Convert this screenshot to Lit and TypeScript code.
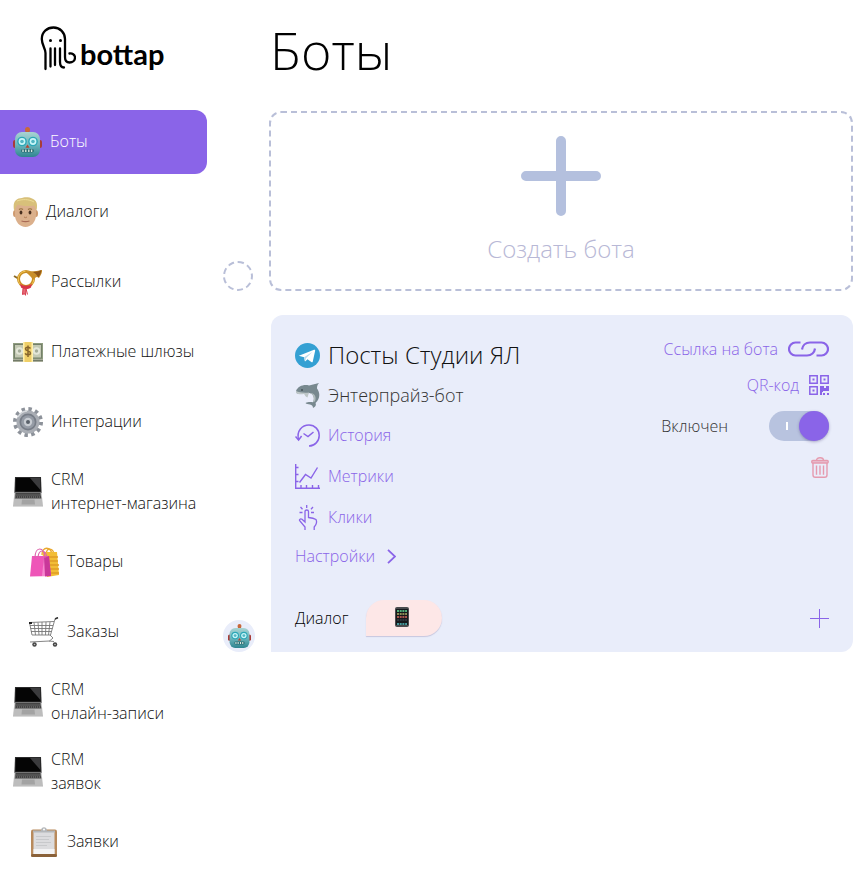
import { LitElement, html, css, svg, type TemplateResult } from "lit";
import { customElement, property, state } from "lit/decorators.js";
import { classMap } from "lit/directives/class-map.js";

interface Icon {
  w: number;
  h: number;
  art: TemplateResult;
}

const icons: Record<string, Icon> = {
  robot: {
    w: 29,
    h: 30,
    art: svg`
      <defs><linearGradient id="rb" x1="0" y1="0" x2="0" y2="1"><stop offset="0" stop-color="#a9d3d2"/><stop offset=".5" stop-color="#6eb6bd"/><stop offset="1" stop-color="#2f8590"/></linearGradient></defs>
      <rect x="12.500" y="3" width="4" height="4" fill="#b5603a"/><circle cx="14.500" cy="2.500" r="2.500" fill="#c8683a"/>
      <rect x="0" y="13" width="4" height="8" rx="2" fill="#a83c38"/><rect x="25" y="13" width="4" height="8" rx="2" fill="#a83c38"/>
      <rect x="2" y="5" width="25" height="25" rx="7" fill="url(#rb)"/>
      <circle cx="9" cy="14.500" r="4.800" fill="#2ba7b7"/><circle cx="20" cy="14.500" r="4.800" fill="#2ba7b7"/>
      <circle cx="9" cy="14.500" r="3.400" fill="#c9f6f8"/><circle cx="20" cy="14.500" r="3.400" fill="#c9f6f8"/>
      <circle cx="9" cy="14.500" r="1.800" fill="#52b6c3"/><circle cx="20" cy="14.500" r="1.800" fill="#52b6c3"/>
      <path d="M14.500 17.500l2 3.200h-4z" fill="#b8452f"/>
      <rect x="8" y="22" width="13" height="3.600" rx="1.800" fill="#2b6d72"/><path d="M10 22.500v2.600M12.800 22.500v2.600M15.800 22.500v2.600M18.600 22.500v2.600" stroke="#dcebe5" stroke-width="1.300"/>`,
  },
  face: {
    w: 25,
    h: 30,
    art: svg`
      <ellipse cx="2" cy="16.500" rx="2" ry="3.500" fill="#cf9a70"/><ellipse cx="23" cy="16.500" rx="2" ry="3.500" fill="#cf9a70"/>
      <path d="M2 10C2 4 6 2 12.500 2S23 4 23 10v8c0 7-5 12-10.500 12S2 25 2 18z" fill="#dbb08c"/>
      <path d="M1 13C-.5 5 3 1 9 1c2-1.500 15-1.500 15 7 0 2 0 4-.6 5.500C22.500 11 22 9.500 21 8.500 15 9.500 8 9 5 7.500 3.500 9 2 11 1.600 14z" fill="#d8c07a"/>
      <path d="M4 4c5-2 12-2 17 1" stroke="#eddc96" fill="none"/>
      <path d="M6 12.500q2-1.500 4 0M15 12.500q2-1.500 4 0" stroke="#97703c" stroke-width="1.200" fill="none"/>
      <ellipse cx="8" cy="15.500" rx="1.400" ry="1.900" fill="#4a3020"/><ellipse cx="17" cy="15.500" rx="1.400" ry="1.900" fill="#4a3020"/>
      <path d="M11 20q1.500 1.300 3 0" stroke="#b07b55" fill="none"/><path d="M8.500 24q4 1.200 8 0" stroke="#a86a55" stroke-width="1.200" fill="none"/>`,
  },
  horn: {
    w: 30,
    h: 30,
    art: svg`
      <g transform="translate(0 3)"><path d="M1 6l5 3" stroke="#8d6a26" stroke-width="2"/>
      <circle cx="13" cy="9" r="7.500" fill="none" stroke="#c98d1f" stroke-width="3"/><circle cx="13" cy="9" r="7.800" fill="none" stroke="#f2c95a" stroke-width="1"/>
      <path d="M12 1C18 1.500 23 1.500 29 0c.5 2-1 5-3 8-2-1.500-3.500-1.500-5 2z" fill="#c98f2a"/><path d="M20 2q5 0 8.500-2-.5 4-3 7.500-1.500-3.500-5.500-5.500z" fill="#8f5619"/>
      <path d="M7 13.500c3 3 9 3 12 0l-1 4c-3 2-7 2-10 0z" fill="#d83448"/><path d="M10 18.500l-.5 6 2-.8 1 1.600.5-7zM13 18.500l1.500 6" stroke="#d83b4c" fill="#e66a78"/></g>`,
  },
  money: {
    w: 30,
    h: 30,
    art: svg`
      <rect x="0" y="6" width="30" height="17" fill="#8f9c80"/><path d="M0 22h30v3H0z" fill="#a9ad9b"/><path d="M0 23.500h30" stroke="#727b68"/>
      <rect x="1.500" y="7.500" width="27" height="13.500" fill="#c3c9b3" stroke="#74806a"/>
      <circle cx="6.500" cy="14" r="3.700" fill="#e3e6d8"/><circle cx="23.500" cy="14" r="3.700" fill="#e3e6d8"/><circle cx="6.500" cy="14" r="1.700" fill="#a4ac98"/><circle cx="23.500" cy="14" r="1.700" fill="#a4ac98"/>
      <rect x="10" y="5" width="10" height="20" fill="#efcf68"/><path d="M10 5h1.500v20H10zM18.500 5H20v20h-1.500z" fill="#fff0ad"/>
      <path d="M17.500 11.500c-1-1.700-5-1.700-5 .5s5 1.600 5 4-4.200 2.300-5.400.3M15 8.500v11.500" fill="none" stroke="#86652b" stroke-width="1.500"/>`,
  },
  gear: {
    w: 30,
    h: 30,
    art: svg`
      <circle cx="15" cy="15" r="13" fill="none" stroke="#8d929a" stroke-width="4" stroke-dasharray="3.400 3.407"/>
      <circle cx="15" cy="15" r="11.500" fill="#a9adb4"/><circle cx="15" cy="15" r="8.500" fill="#777d87"/><circle cx="15" cy="15" r="6.800" fill="#969ca6"/>
      <circle cx="15" cy="15" r="4.200" fill="#c9cdd3"/><circle cx="15" cy="15" r="2" fill="#59606a"/><path d="M5 10a11 11 0 0 1 9-6" stroke="#d6d9dd" stroke-width="1.500" fill="none"/>`,
  },
  laptop: {
    w: 30,
    h: 30,
    art: svg`
      <path d="M2 0h26l.6 16H1.400z" fill="#2a2a2b"/><path d="M3 1h24l.4 13.500H2.600z" fill="#050505"/><path d="M17 1h10l.4 12z" fill="#3b3b3d"/>
      <path d="M1.500 15.500h27L30 29H0z" fill="#bdbdbd"/><path d="M2.500 16h25l.8 5.500H1.800z" fill="#444"/><path d="M2.500 18h25M2 20h26" stroke="#999" stroke-width=".7" stroke-dasharray="1 1"/>
      <path d="M9 22.500h12.500l.5 5H8.500z" fill="#a3a3a3"/><path d="M0 29h30v1H0z" fill="#d9d9d9"/>`,
  },
  bags: {
    w: 30,
    h: 30,
    art: svg`
      <path d="M13 8c0-9 9-9 10 0M17 7c1-7 7-6 8 0" fill="none" stroke="#e9a92f" stroke-width="1.300"/>
      <path d="M13 5h15l2 23-12 2z" fill="#f2bd35"/><path d="M16 10h13M16 14h13M16 18h14M16 22h14M16 26h14" stroke="#df9c25" stroke-width="1.300"/>
      <path d="M3 9h17l2 20-21 .6z" fill="#ee55b8"/><path d="M15 10l5-1 2 20-6 .4-2-8z" fill="#c9379a"/><path d="M15 10l-2 19h3z" fill="#f787cf"/>
      <path d="M6 11c0-12 9-12 10 0M9 10c1-8 7-8 9 0" fill="none" stroke="#dd63ab" stroke-width="1.200"/>`,
  },
  cart: {
    w: 30,
    h: 30,
    art: svg`
      <g fill="none" stroke="#777" stroke-width=".9"><path d="M29 1l-3 1-4.500 16H3L.5 5.500 25 4.500M1 8.500h23M1.500 11.500h22M2 14.500h20.500M5 5.500l1.500 12.500M9 5.500l1 12.500M13 5v13M17 5l-.5 13M21 5l-1.500 13"/><path d="M21 18l3 3-3.500 3L1 25M25 24.500l-5-.5"/></g>
      <rect x="0" y="5" width="3" height="2" fill="#222"/><path d="M26 2l3-1.500" stroke="#333" stroke-width="1.500"/>
      <circle cx="5.500" cy="27.500" r="2.200" fill="#444"/><circle cx="26" cy="27.500" r="2.200" fill="#444"/><circle cx="5.500" cy="27.500" r=".8" fill="#bbb"/><circle cx="26" cy="27.500" r=".8" fill="#bbb"/>`,
  },
  clipboard: {
    w: 30,
    h: 30,
    art: svg`
      <rect x="2" y="2.500" width="26" height="27.500" rx="2" fill="#b88a5c"/><rect x="2" y="27" width="26" height="3" rx="1.500" fill="#8a6139"/>
      <path d="M4.500 5h21v22h-21z" fill="#dcdcde"/><path d="M4.500 22h21v5h-21z" fill="#f4f4f5"/><path d="M7 9.500h15M7 12.500h13M7 15.500h15M7 18.500h11" stroke="#c3c4c7" stroke-width=".8"/>
      <path d="M4 5.500V3.500h8c0-4.500 6-4.500 6 0h8v2z" fill="#b4b7ba"/><circle cx="15" cy="2.600" r="1" fill="#fff"/>`,
  },
  telegram: {
    w: 25,
    h: 25,
    art: svg`<circle cx="12.500" cy="12.500" r="12.500" fill="#34a0d3"/><path d="M4.500 12.500L19 6.800c1-.3 1.300.2 1.100 1.200l-2.300 10.400c-.2.900-.8 1-1.500.6l-3.800-2.800-1.800 1.800c-.5.500-.9.300-1-.3l-.6-3.400-4.500-1.200c-.7-.2-.7-.5-.1-.6z" fill="#fff"/><path d="M9.100 14.300l8.500-5.600-6.700 6.500-.5 2.800z" fill="#b9d9eb"/>`,
  },
  dolphin: {
    w: 25,
    h: 25,
    art: svg`
      <path d="M1 8C3 3 9 1 14 2.500L24 0c-2 2-2 4-2 5.500C25.500 10 25 16 20.500 20c1 2 0 4-2.500 5 0-2-1-3-3-3.500-2-.3-3.500-.2-4.500-1.500 3-1.500 5.500-1 7.500-.7C20 15 18.500 11 14.500 10L10 11 7 10 2 10.500z" fill="#78898f"/>
      <path d="M1 8c3 1.500 8 2 13 1.500l-1.500 5C10 13.500 10 12 9 11 6 11.500 3 11.500 1 10z" fill="#bdc6c7"/><path d="M14.500 10c4 1 5.500 5 3.500 9.300l2-1c2-5-1-9-5.500-8.300z" fill="#b2bdbe"/><circle cx="7" cy="7" r=".8" fill="#202b30"/>`,
  },
  phone: {
    w: 14,
    h: 20,
    art: svg`
      <rect x="0" y="0" width="14" height="20" rx="2" fill="#4a4b4d"/><rect x="1" y="2" width="12" height="16" fill="#16191c"/>
      <path d="M2 4h10" stroke="#4fae7a" stroke-width="2" stroke-dasharray="2 .7"/><path d="M2 7h10" stroke="#8a8c55" stroke-width="2" stroke-dasharray="2 .7"/><path d="M2 10h10" stroke="#a8554e" stroke-width="2" stroke-dasharray="2 .7"/><path d="M2 13h10" stroke="#2c343c" stroke-width="2" stroke-dasharray="2 .7"/><path d="M2 17h10" stroke="#55c3c5" stroke-width="1.500" stroke-dasharray="2 .7"/>`,
  },
  history: {
    w: 25,
    h: 25,
    art: svg`<g fill="none" stroke="currentColor" stroke-width="1.500"><path d="M3.500 16.500C1.500 8 7 2 14 2c6 0 10.200 4.800 10.200 10.500S19.700 23 14 23"/><path d="M.5 13.500L3.600 17l3-4"/><path d="M8.500 10.500l4.500 3 5.500-4.500"/></g>`,
  },
  metrics: {
    w: 25,
    h: 25,
    art: svg`<g fill="none" stroke="currentColor" stroke-width="1.400"><path d="M.7 0v24.300H25M.7 3.500H3.500M.7 10.500H3.500M.7 17.500H3.500M6 24v-3M11.500 24v-3M17.500 24v-3M23.500 24v-3"/><path d="M4.500 18.500l6-8 5.500 3.500 6.500-10.500"/></g>`,
  },
  clicks: {
    w: 25,
    h: 25,
    art: svg`<g fill="none" stroke="currentColor" stroke-width="1.300"><path d="M10 25v-3l-5.500-6.500c-.5-1.500 1.500-2 2.500-1.200L10 17V6.500c0-2 3.500-2 3.500 0v6c3 .3 5.500.8 7.500 2 1.500 3 0 5.500-1.800 7.500v3"/><path d="M11.700 0v3M5.500 2l2 2.200M18 2l-2 2.200M4.500 7.500h3M16 7.500h3"/></g>`,
  },
  chevron: { w: 9, h: 15, art: svg`<path d="M1 .8l7 6.700-7 6.700" fill="none" stroke="currentColor" stroke-width="1.800"/>` },
  chain: {
    w: 41,
    h: 16,
    art: svg`<path d="M12.500 1.500H7.500a6.500 6.500 0 0 0 0 13H19c4.500 0 7.500-3 8-7M28.500 14.500h5a6.500 6.500 0 0 0 0-13H22c-4.500 0-7.500 3-8 7" fill="none" stroke="currentColor" stroke-width="2.200"/>`,
  },
  qr: {
    w: 20,
    h: 20,
    art: svg`<path d="M.8.8h7.400v7.400H.8zM11.800.8h7.400v7.400h-7.400zM.8 11.800h7.400v7.400H.8z" fill="none" stroke="currentColor" stroke-width="1.500"/><path d="M3.500 3.500h2v2h-2zM14.500 3.500h2v2h-2zM3.500 14.500h2v2h-2zM11 11h4v2h2v-2h3v5h-6v1h-1v3h-2zM14 18h2v2h-2zM18 18h2v2h-2z" fill="currentColor"/>`,
  },
  trash: {
    w: 18,
    h: 21,
    art: svg`<g fill="none" stroke="currentColor" stroke-width="1.400"><path d="M5.500 3.500c0-3.700 7-3.700 7 0"/><rect x=".8" y="3.500" width="16.400" height="2.500" rx="1" fill="currentColor" fill-opacity=".5"/><path d="M2 6v12c0 1.500.8 2.300 2.300 2.300h9.400c1.500 0 2.300-.8 2.300-2.300V6"/><path d="M5.500 8.500v9.300M9 8.500v9.300M12.500 8.500v9.300"/></g>`,
  },
  bigPlus: { w: 80, h: 80, art: svg`<path d="M40 5v70M5 40h70" stroke="currentColor" stroke-width="10" stroke-linecap="round"/>` },
  plus: { w: 19, h: 19, art: svg`<path d="M9.500 0v19M0 9.500h19" stroke="currentColor" stroke-width="1"/>` },
  octopus: {
    w: 36,
    h: 45,
    art: svg`<g fill="none" stroke="#000" stroke-width="2.300" stroke-linecap="round"><path d="M5.500 43V27C5.500 22.500 1.800 19 1.800 13 1.800 6 7 1.500 13.500 1.500S25 6.500 25 13v18c0 3.500 1.500 5.500 4.500 5.500S35 34.500 35 31.500 32 27 29.500 27.500"/><path d="M10.500 22.500v18M15 22.500v16.500M20 22.500V36c0 3.500 1.500 5.500 4 5.500"/></g><circle cx="10.500" cy="14.500" r="1.500"/><circle cx="20.500" cy="14.500" r="1.500"/>`,
  },
};

@customElement("app-icon")
export class AppIcon extends LitElement {
  static styles = css`
    :host {
      display: inline-flex;
      flex: none;
    }
  `;

  @property() name = "plus";
  @property({ type: Number }) size = 0;

  render() {
    const icon = icons[this.name];
    const h = this.size || icon.h;
    const w = this.size ? Math.round((icon.w * this.size) / icon.h) : icon.w;
    return html`<svg width=${w} height=${h} viewBox="0 0 ${icon.w} ${icon.h}" aria-hidden="true">${icon.art}</svg>`;
  }
}

interface MenuItem {
  icon: string;
  lines: string[];
  nested?: boolean;
}

const menu: MenuItem[] = [
  { icon: "robot", lines: ["Боты"] },
  { icon: "face", lines: ["Диалоги"] },
  { icon: "horn", lines: ["Рассылки"] },
  { icon: "money", lines: ["Платежные шлюзы"] },
  { icon: "gear", lines: ["Интеграции"] },
  { icon: "laptop", lines: ["CRM", "интернет-магазина"] },
  { icon: "bags", lines: ["Товары"], nested: true },
  { icon: "cart", lines: ["Заказы"], nested: true },
  { icon: "laptop", lines: ["CRM", "онлайн-записи"] },
  { icon: "laptop", lines: ["CRM", "заявок"] },
  { icon: "clipboard", lines: ["Заявки"], nested: true },
];

@customElement("app-sidebar")
export class AppSidebar extends LitElement {
  static styles = css`
    :host {
      display: block;
    }
    .logo {
      display: flex;
      align-items: center;
      gap: 4px;
      height: 110px;
      padding: 0 0 14px 40px;
      box-sizing: border-box;
      color: #000;
      font: 700 29px/32px Lato, sans-serif;
      text-decoration: none;
    }
    .word {
      padding-top: 12px;
    }
    .menu {
      display: flex;
      flex-direction: column;
      gap: 6px;
    }
    .item {
      display: flex;
      align-items: center;
      gap: 8px;
      min-height: 64px;
      padding-left: 13px;
      border-radius: 0 12px 12px 0;
      color: #111;
      line-height: 24px;
      text-decoration: none;
      white-space: nowrap;
    }
    .nested {
      padding-left: 29px;
    }
    .active {
      background: #8a64e8;
      color: #fff;
    }
    .text {
      padding-bottom: 2px;
    }
    .line {
      display: block;
    }
  `;

  @state() private active = 0;

  private select(event: Event, index: number) {
    event.preventDefault();
    this.active = index;
  }

  render() {
    return html`
      <a class="logo" href="#"><app-icon name="octopus"></app-icon><span class="word">bottap</span></a>
      <nav class="menu">
        ${menu.map(
          (item, i) => html`
            <a
              href="#"
              class=${classMap({ item: true, nested: !!item.nested, active: i === this.active })}
              @click=${(e: Event) => this.select(e, i)}
            >
              <app-icon name=${item.icon}></app-icon>
              <span class="text">${item.lines.map((line) => html`<span class="line">${line}</span>`)}</span>
            </a>
          `,
        )}
      </nav>
    `;
  }
}

@customElement("bot-card")
export class BotCard extends LitElement {
  static styles = css`
    :host {
      display: block;
      flex: 1;
      min-width: 0;
    }
    .card {
      display: flex;
      flex-direction: column;
      gap: 30px;
      padding: 24px 24px 16px;
      border-radius: 12px 12px 12px 0;
      background: #e9edfa;
    }
    .top {
      display: flex;
      justify-content: space-between;
      align-items: flex-start;
    }
    .info,
    .links,
    .side {
      display: flex;
      flex-direction: column;
      align-items: flex-start;
    }
    .info {
      gap: 12px;
    }
    .links {
      gap: 16px;
      padding-top: 4px;
    }
    .row {
      display: flex;
      align-items: center;
      gap: 8px;
      margin: 0;
      font-weight: 300;
    }
    .title {
      font-size: 24px;
      line-height: 32px;
      color: #111;
    }
    .plan {
      font-size: 18px;
      line-height: 24px;
      height: 24px;
      color: #333;
    }
    .link {
      color: #8a64e8;
      line-height: 25px;
      text-decoration: none;
    }
    .settings {
      gap: 12px;
      line-height: 28px;
    }
    .side {
      gap: 16px;
      align-items: flex-end;
    }
    .side .link {
      gap: 10px;
      height: 20px;
      line-height: 20px;
    }
    .power {
      display: flex;
      align-items: center;
      gap: 41px;
      color: #333;
    }
    .switch {
      appearance: none;
      display: flex;
      align-items: center;
      justify-content: flex-end;
      box-sizing: border-box;
      width: 60px;
      height: 30px;
      margin: 0;
      border-radius: 15px;
      background: #b8c3df;
      cursor: pointer;
    }
    .switch::before {
      content: "";
      width: 2px;
      height: 8px;
      margin-right: 11px;
      background: #fff;
    }
    .switch::after {
      content: "";
      width: 30px;
      height: 30px;
      border-radius: 50%;
      background: #8a64e8;
      box-shadow: 0 1px 3px rgba(70, 60, 120, 0.4);
    }
    .switch:not(:checked) {
      flex-direction: row-reverse;
    }
    .icon-button {
      display: flex;
      padding: 0;
      border: 0;
      background: none;
      color: #8a64e8;
      cursor: pointer;
    }
    .remove {
      color: #e59aae;
    }
    .bottom {
      display: flex;
      align-items: center;
      gap: 18px;
      color: #000;
    }
    .channel {
      display: flex;
      align-items: center;
      justify-content: center;
      width: 76px;
      height: 36px;
      padding: 0 4px 2px 0;
      border: 0;
      border-radius: 18px 18px 18px 0;
      background: #fde7e7;
      box-shadow: 0 1px 1px rgba(120, 110, 160, 0.3);
      cursor: pointer;
    }
    .add {
      margin-left: auto;
    }
  `;

  render() {
    return html`
      <article class="card">
        <div class="top">
          <div class="info">
            <h2 class="row title"><app-icon name="telegram"></app-icon>Посты Студии ЯЛ</h2>
            <p class="row plan"><app-icon name="dolphin"></app-icon>Энтерпрайз-бот</p>
            <div class="links">
              <a class="row link" href="#history"><app-icon name="history"></app-icon>История</a>
              <a class="row link" href="#metrics"><app-icon name="metrics"></app-icon>Метрики</a>
              <a class="row link" href="#clicks"><app-icon name="clicks"></app-icon>Клики</a>
            </div>
            <a class="row link settings" href="#settings">Настройки<app-icon name="chevron"></app-icon></a>
          </div>
          <div class="side">
            <a class="row link" href="#link">Ссылка на бота<app-icon name="chain"></app-icon></a>
            <a class="row link" href="#qr">QR-код<app-icon name="qr"></app-icon></a>
            <label class="power">Включен<input class="switch" type="checkbox" role="switch" checked /></label>
            <button class="icon-button remove" aria-label="Удалить"><app-icon name="trash"></app-icon></button>
          </div>
        </div>
        <div class="bottom">
          <span>Диалог</span>
          <button class="channel" aria-label="Телефон"><app-icon name="phone"></app-icon></button>
          <button class="icon-button add" aria-label="Добавить"><app-icon name="plus"></app-icon></button>
        </div>
      </article>
    `;
  }
}

@customElement("app-root")
export class AppRoot extends LitElement {
  static styles = css`
    :host {
      display: grid;
      grid-template-columns: 207px minmax(0, 1fr);
      min-height: 100vh;
      background: #fff;
      font: 300 16px/24px "Open Sans", sans-serif;
    }
    .main {
      display: flex;
      flex-direction: column;
      gap: 24px;
      padding: 18px 12px 24px 16px;
    }
    .heading {
      margin: 0 0 5px 47px;
      color: #000;
      font-size: 52px;
      line-height: 64px;
      font-weight: 300;
    }
    .entry {
      display: flex;
      align-items: flex-end;
      gap: 16px;
    }
    .slot,
    .avatar {
      box-sizing: border-box;
      flex: none;
      border-radius: 50%;
    }
    .slot {
      width: 30px;
      height: 30px;
      border: 2px dashed #b9bfd8;
    }
    .avatar {
      display: flex;
      align-items: center;
      justify-content: center;
      width: 32px;
      height: 32px;
      background: #e9edfa;
    }
    .create {
      display: flex;
      flex: 1;
      flex-direction: column;
      align-items: center;
      gap: 16px;
      padding: 23px 0 24px;
      border: 2px dashed #b9bfd8;
      border-radius: 12px;
      background: none;
      color: #b4c0de;
      font: inherit;
      font-size: 24px;
      line-height: 33px;
      cursor: pointer;
    }
    .caption {
      color: #b8b8d6;
    }
  `;

  render() {
    return html`
      <app-sidebar></app-sidebar>
      <main class="main">
        <h1 class="heading">Боты</h1>
        <div class="entry">
          <span class="slot"></span>
          <button class="create"><app-icon name="bigPlus"></app-icon><span class="caption">Создать бота</span></button>
        </div>
        <div class="entry">
          <span class="avatar"><app-icon name="robot" size="24"></app-icon></span>
          <bot-card></bot-card>
        </div>
      </main>
    `;
  }
}
